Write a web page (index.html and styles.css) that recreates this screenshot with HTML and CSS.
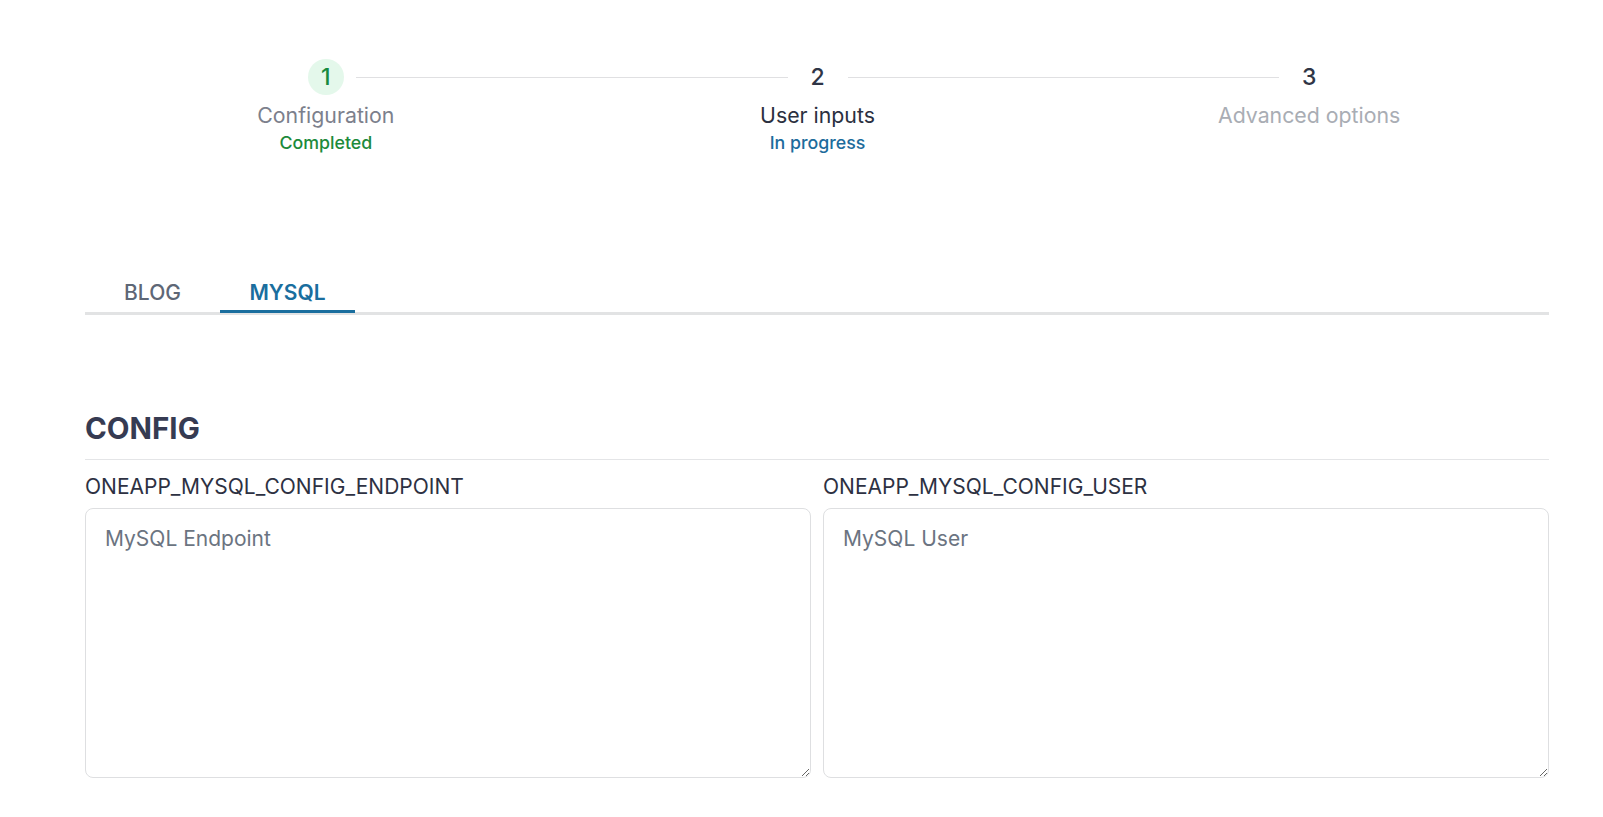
FILE: index.html
```html
<!DOCTYPE html>
<html lang="en">
<head>
<meta charset="utf-8">
<title>Wizard</title>
<link rel="stylesheet" href="styles.css">
</head>
<body>
<div class="page">
  <div class="stepper">
    <div class="step step-done">
      <div class="step-icon-row">
        <span class="line line-left hidden"></span>
        <span class="step-icon">1</span>
        <span class="line line-right"></span>
      </div>
      <div class="step-title">Configuration</div>
      <div class="step-sub">Completed</div>
    </div>
    <div class="step step-active">
      <div class="step-icon-row">
        <span class="line line-left"></span>
        <span class="step-icon">2</span>
        <span class="line line-right"></span>
      </div>
      <div class="step-title">User inputs</div>
      <div class="step-sub">In progress</div>
    </div>
    <div class="step step-todo">
      <div class="step-icon-row">
        <span class="line line-left"></span>
        <span class="step-icon">3</span>
        <span class="line line-right hidden"></span>
      </div>
      <div class="step-title">Advanced options</div>
    </div>
  </div>

  <div class="tabs">
    <div class="tab">BLOG</div>
    <div class="tab tab-active">MYSQL</div>
  </div>

  <section class="section">
    <h2 class="section-title">CONFIG</h2>
    <div class="fields">
      <div class="field">
        <label class="field-label">ONEAPP_MYSQL_CONFIG_ENDPOINT</label>
        <textarea class="field-input" placeholder="MySQL Endpoint"></textarea>
      </div>
      <div class="field">
        <label class="field-label">ONEAPP_MYSQL_CONFIG_USER</label>
        <textarea class="field-input" placeholder="MySQL User"></textarea>
      </div>
    </div>
  </section>
</div>
</body>
</html>
```

FILE: styles.css
```css
* { box-sizing: border-box; }
html, body { margin: 0; padding: 0; background: #ffffff; }
body {
  font-family: Inter, "Noto Sans", "Liberation Sans", sans-serif;
  color: #2d3142;
}
.page {
  padding: 59px 54px 0 85px;
}

/* Stepper */
.stepper {
  display: grid;
  grid-template-columns: repeat(3, 1fr);
  margin: 0 -6px 0 -5px;
}
.step {
  display: flex;
  flex-direction: column;
  align-items: center;
}
.step-icon-row {
  display: flex;
  align-items: center;
  width: 100%;
  height: 36px;
}
.line {
  flex: 1;
  height: 1px;
  background: #e0e0e2;
}
.line-left { margin-right: 12px; }
.line-right { margin-left: 12px; }
.line.hidden { background: transparent; }
.step-icon {
  width: 36px;
  height: 36px;
  border-radius: 50%;
  display: flex;
  align-items: center;
  justify-content: center;
  font-size: 23px;
  font-weight: 500;
  color: #2f3546;
}
.step-done .step-icon {
  background: #e4f8eb;
  color: #178a3e;
}
.step-title {
  margin-top: 8px;
  font-size: 21.3px;
  line-height: 24px;
  color: #2b3040;
}
.step-sub {
  margin-top: 4px;
  font-size: 17.8px;
  line-height: 24px;
  font-weight: 500;
}
.step-done .step-title { color: #7c808c; }
.step-done .step-sub { color: #1d8a3b; }
.step-active .step-sub { color: #1d6c9c; }
.step-todo .step-title { color: #a9adb4; }

/* Tabs */
.tabs {
  display: flex;
  margin-top: 116px;
  border-bottom: 3px solid #e2e3e4;
}
.tab {
  width: 135px;
  text-align: center;
  font-size: 21px;
  line-height: 24px;
  font-weight: 500;
  color: #5e6776;
  padding: 10px 0 5px;
  border-bottom: 3px solid transparent;
  margin-bottom: -1px;
}
.tab-active {
  color: #1a6e9e;
  font-weight: 600;
  border-bottom-color: #1a6e9e;
}

/* Section */
.section {
  margin-top: 95px;
}
.section-title {
  margin: 0;
  font-size: 29.5px;
  line-height: 36px;
  font-weight: 700;
  color: #363b52;
  padding-bottom: 13px;
  border-bottom: 1px solid #e4e5e7;
}
.fields {
  display: grid;
  grid-template-columns: 1fr 1fr;
  gap: 12px;
  margin-top: 15px;
}
.field {
  display: flex;
  flex-direction: column;
}
.field-label {
  font-size: 21px;
  line-height: 24px;
  color: #2d3142;
}
.field-input {
  margin-top: 9px;
  height: 270px;
  width: 100%;
  border: 1px solid #dedfe1;
  border-radius: 8px;
  padding: 18px 19px;
  font-family: Inter, "Noto Sans", "Liberation Sans", sans-serif;
  font-size: 21px;
  line-height: 24px;
  color: #2d3142;
  background: #ffffff;
  outline: none;
}
.field-input::placeholder {
  color: #6b7481;
  opacity: 1;
}
```
